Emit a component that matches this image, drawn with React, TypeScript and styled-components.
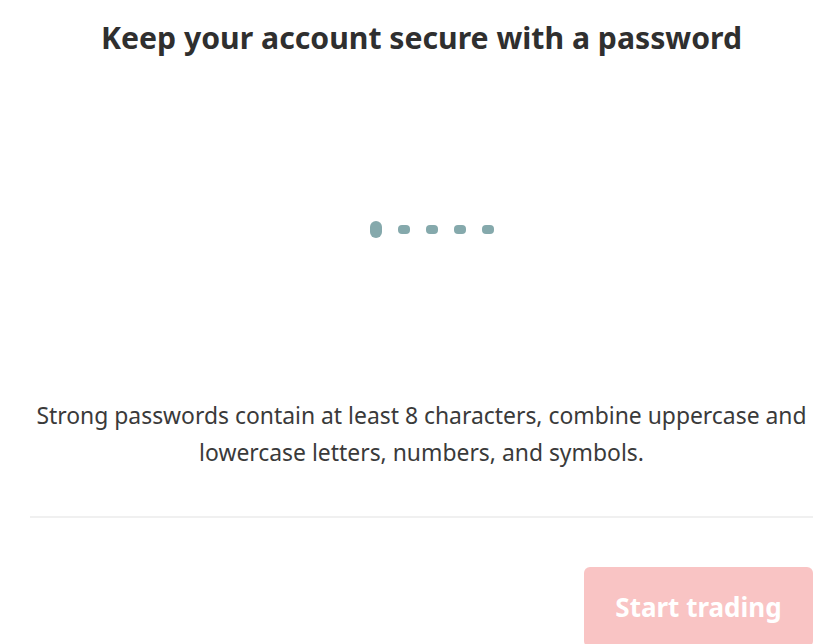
import styled, { createGlobalStyle } from "styled-components";

const GlobalStyle = createGlobalStyle`
  html, body {
    margin: 0;
    padding: 0;
    background: #ffffff;
    font-family: "Noto Sans", "Open Sans", sans-serif;
    color: #333333;
  }
`;

const StyledPage = styled.div`
  display: flex;
  flex-direction: column;
  padding: 0 25px 0 30px;
  height: 644px;
  overflow: hidden;

  & > * {
    flex-shrink: 0;
  }
`;

const StyledTitle = styled.h1`
  margin: 18px 0 0;
  font-size: 30.2px;
  line-height: 40px;
  font-weight: 700;
  text-align: center;
  color: #2f2f2f;
`;

const StyledLoaderArea = styled.div`
  height: 339px;
  display: flex;
  align-items: center;
  justify-content: center;
  gap: 16px;
  padding-left: 21px;
  padding-top: 3px;
  box-sizing: border-box;
`;

const StyledDot = styled.span<{ active?: boolean }>`
  display: block;
  width: 12px;
  height: ${({ active }) => (active ? "17px" : "9px")};
  border-radius: ${({ active }) => (active ? "6px" : "4px")};
  background: #85a9ac;
`;

const StyledHint = styled.p`
  margin: 0;
  font-size: 22.9px;
  line-height: 37px;
  text-align: center;
  color: #3a3a3a;
`;

const StyledDivider = styled.hr`
  margin: 45px 0 0;
  border: none;
  height: 2px;
  background: #f0f0f0;
`;

const StyledFooter = styled.div`
  display: flex;
  justify-content: flex-end;
  margin-top: 49px;
`;

const StyledButton = styled.button`
  width: 229px;
  height: 80px;
  border: none;
  border-radius: 6px;
  background: #f9c4c4;
  color: #ffffff;
  font-family: inherit;
  font-size: 26px;
  font-weight: 700;
  cursor: not-allowed;
`;

export default function App() {
  return (
    <>
      <GlobalStyle />
      <StyledPage>
        <StyledTitle>Keep your account secure with a password</StyledTitle>
        <StyledLoaderArea>
          <StyledDot active />
          <StyledDot />
          <StyledDot />
          <StyledDot />
          <StyledDot />
        </StyledLoaderArea>
        <StyledHint>
          Strong passwords contain at least 8 characters, combine uppercase and
          lowercase letters, numbers, and symbols.
        </StyledHint>
        <StyledDivider />
        <StyledFooter>
          <StyledButton disabled>Start trading</StyledButton>
        </StyledFooter>
      </StyledPage>
    </>
  );
}
